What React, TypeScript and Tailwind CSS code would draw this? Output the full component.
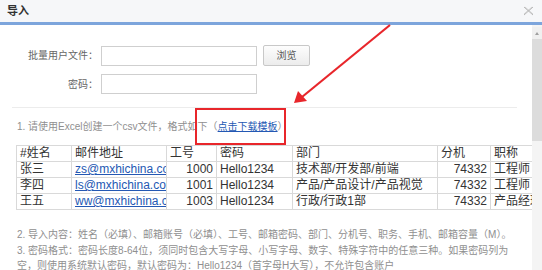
import React from 'react';

/* 导入对话框 — 批量导入用户 */

type Row = {
  name: string;
  email: string;
  no: string;
  pwd: string;
  dept: string;
  ext: string;
  title: string;
};

const rows: Row[] = [
  { name: '张三', email: 'zs@mxhichina.com', no: '1000', pwd: 'Hello1234', dept: '技术部/开发部/前端', ext: '74332', title: '工程师' },
  { name: '李四', email: 'ls@mxhichina.com', no: '1001', pwd: 'Hello1234', dept: '产品/产品设计/产品视觉', ext: '74332', title: '工程师' },
  { name: '王五', email: 'ww@mxhichina.com', no: '1003', pwd: 'Hello1234', dept: '行政/行政1部', ext: '74332', title: '产品经理' },
];

const cell = 'border border-[#d9d9d9] px-[3px] h-[16px] leading-[15px] whitespace-nowrap overflow-hidden';

export default function App() {
  return (
    <div
      className="relative w-[542px] h-[270px] overflow-hidden bg-white text-[#333]"
      style={{ fontFamily: '"Liberation Sans", "Noto Sans CJK SC", sans-serif' }}
    >
      {/* 标题栏 */}
      <div className="h-[22px] bg-[#f6f7f9] flex items-center justify-between pl-[7px] pr-[8px] border-b-[3px] border-[#7da5dc] box-content">
        <span className="text-[11px] font-bold text-[#333]">导入</span>
        <svg width="11" height="10" viewBox="0 0 11 10" className="text-[#b8b8b8]">
          <path d="M1 1 L10 9 M10 1 L1 9" stroke="currentColor" strokeWidth="1" fill="none" />
          <path d="M2 1 L10 8 M9 1 L1 8" stroke="currentColor" strokeWidth="0.6" fill="none" />
        </svg>
      </div>

      <div className="flex h-[245px]">
        {/* 内容区 */}
        <div className="flex-1 overflow-hidden">
          <div className="pt-[20px] flex flex-col gap-[8px]">
            <div className="flex items-center">
              <label className="w-[101px] pr-[3px] text-right text-[10px] text-[#666]">批量用户文件：</label>
              <div className="w-[156px] h-[20px] border border-[#cfcfcf] bg-white" />
              <button className="ml-[6px] w-[47px] h-[21px] border border-[#c8c8c8] rounded-[2px] bg-gradient-to-b from-[#fdfdfd] to-[#ececec] text-[10px] text-[#555]">
                浏览
              </button>
            </div>
            <div className="flex items-center">
              <label className="w-[101px] pr-[3px] text-right text-[10px] text-[#666]">密码：</label>
              <div className="w-[156px] h-[20px] border border-[#cfcfcf] bg-white" />
            </div>
          </div>

          <div className="ml-[12px] w-[505px] mt-[13px] border-t border-[#ececec]" />

          <div className="pl-[17px] mt-[12px] text-[10px] leading-[14px] text-[#8f8f8f] whitespace-nowrap">
            1. 请使用Excel创建一个csv文件，格式如下（
            <a className="text-[#2458b3] underline">点击下载模板</a>）
          </div>

          {/* 示例表格 */}
          <div className="ml-[16px] mt-[11px] w-[600px]">
            <table className="table-fixed w-[534px] border-collapse text-[12px] text-[#333]">
              <colgroup>
                <col className="w-[55px]" />
                <col className="w-[95px]" />
                <col className="w-[50px]" />
                <col className="w-[76px]" />
                <col className="w-[145px]" />
                <col className="w-[53px]" />
                <col className="w-[60px]" />
              </colgroup>
              <thead>
                <tr>
                  <td className={cell}>#姓名</td>
                  <td className={cell}>邮件地址</td>
                  <td className={cell}>工号</td>
                  <td className={cell}>密码</td>
                  <td className={cell}>部门</td>
                  <td className={cell}>分机</td>
                  <td className={cell}>职称</td>
                </tr>
              </thead>
              <tbody>
                {rows.map((r) => (
                  <tr key={r.no}>
                    <td className={cell}>{r.name}</td>
                    <td className={`${cell} text-[#2458b3] underline text-clip`}>{r.email}</td>
                    <td className={`${cell} text-right`}>{r.no}</td>
                    <td className={cell}>{r.pwd}</td>
                    <td className={cell}>{r.dept}</td>
                    <td className={`${cell} text-right`}>{r.ext}</td>
                    <td className={cell}>{r.title}</td>
                  </tr>
                ))}
              </tbody>
            </table>
          </div>

          <div className="pl-[17px] mt-[17px] text-[10px] leading-[15.5px] text-[#8f8f8f] whitespace-nowrap">
            <p>2. 导入内容：姓名（必填）、邮箱账号（必填）、工号、邮箱密码、部门、分机号、职务、手机、邮箱容量（M）。</p>
            <p>3. 密码格式：密码长度8-64位，须同时包含大写字母、小写字母、数字、特殊字符中的任意三种。如果密码列为</p>
            <p>空，则使用系统默认密码，默认密码为：Hello1234（首字母H大写），不允许包含账户</p>
          </div>
        </div>

        {/* 滚动条 */}
        <div className="w-[10px] flex flex-col bg-[#f4f4f4]">
          <div className="h-[12px] mt-[2px] flex items-center justify-center bg-[#f0f0f0]">
            <div className="w-0 h-0 border-l-[2px] border-r-[2px] border-b-[3px] border-l-transparent border-r-transparent border-b-[#a0a0a0]" />
          </div>
          <div className="h-[102px] bg-[#dcdcdc]" />
        </div>
      </div>

      {/* 红框与箭头标注 */}
      <div className="absolute left-[195px] top-[108px] w-[91px] h-[37px] border-2 border-[#e8262b]" />
      <svg className="absolute left-0 top-0 pointer-events-none" width="542" height="270">
        <line x1="390" y1="25" x2="302" y2="97" stroke="#e8262b" strokeWidth="2.2" />
        <polygon points="294,103 298,91 307,101" fill="#e8262b" />
      </svg>
    </div>
  );
}
